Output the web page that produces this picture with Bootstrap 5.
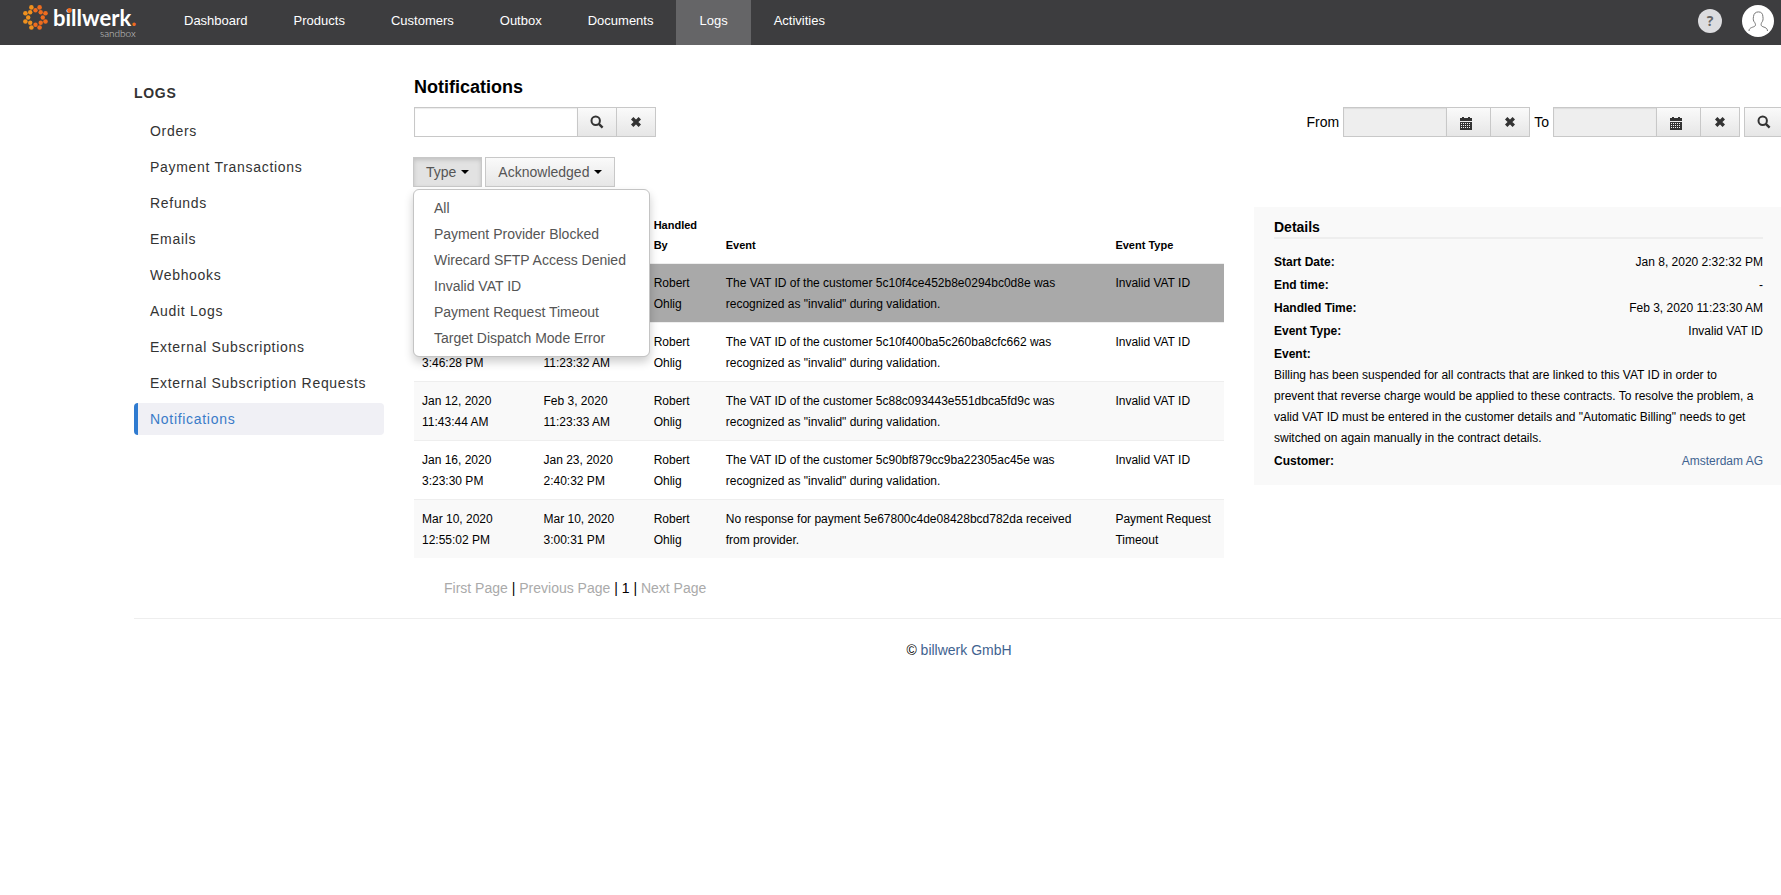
<!DOCTYPE html>
<html lang="en">
<head>
<meta charset="utf-8">
<meta name="viewport" content="width=device-width, initial-scale=1">
<title>Notifications - billwerk sandbox</title>
<link href="https://cdn.jsdelivr.net/npm/bootstrap@5.3.0/dist/css/bootstrap.min.css" rel="stylesheet">
<style>
  body { font-family: "Liberation Sans", Arial, sans-serif; font-size: 14px; line-height: 21px; color: #000; background: #fff; overflow-x: hidden; }
  a { color: #3f6390; text-decoration: none; }
  .topbar { background: #3d3d3f; height: 45px; padding: 0 7px 0 20px; }
  .brand-logo { width: 120px; height: 45px; }
  .main-menu { margin-left: 21px; }
  .main-menu .nav-link { color: #fff; font-size: 13px; line-height: 21px; padding: 10px 23px 14px; }
  .main-menu .nav-link.active { background: #656567; }
  .top-actions { gap: 20px; padding-top: 5px; }
  .round-btn { border: 0; padding: 0; border-radius: 50%; display: block; }
  .help-btn { width: 24px; height: 24px; background: #dcdcdf; color: #666; font: bold 14px/24px "Open Sans", sans-serif; }
  .avatar-btn { width: 32px; height: 32px; background: #fff; }
  .page-body { width: calc(100% + 3px); padding-left: 134px; }
  .columns { gap: 30px; }
  .side { width: 250px; flex: none; padding-top: 38px; letter-spacing: .05em; }
  .side-title { font-size: 14px; font-weight: bold; line-height: 21px; color: #333; margin: 0 0 11px; }
  .side .nav-link { color: #333; line-height: 22px; padding: 5px 12px; border-left: 4px solid transparent; border-radius: 4px; }
  .side .nav-link.active { color: #3a7bc8; background: #f0f0f5; border-left-color: #2f7bd0; }
  .page-title { font-size: 18px; font-weight: bold; line-height: 24px; margin: 0 0 8px; }
  .content-area { padding-top: 30px; }
  .tool, .tool-input { height: 30px; border: 1px solid #c8c8c8; border-radius: 0; }
  .tool { background: linear-gradient(#fafafa, #e6e6e6); padding: 0; width: 40px; display: flex; align-items: center; justify-content: center; color: #333; }
  .tool-input { padding: 0 6px; box-shadow: inset 0 1px 1px rgba(0,0,0,.08); font-size: 14px; }
  .tool-input[readonly] { background: #eee; width: 104px; }
  .tool + .tool, .tool-input + .tool { margin-left: -1px; }
  .search-input { width: 164px; }
  .tool.cal { width: 45px; padding: 2px 5px 0 0; }
  .filters { gap: 3px; margin: 20px 0 0 -1px; }
  .filter-btn { height: 30px; border: 1px solid #c8c8c8; background: linear-gradient(#fafafa, #e6e6e6); color: #555; padding: 0 12px; line-height: 28px; }
  .filter-btn.show { background: #e2e2e2; box-shadow: inset 0 2px 4px rgba(0,0,0,.15); }
  .filter-btn::after { content: ""; display: inline-block; border: 4px solid transparent; border-top-color: #000; border-bottom: 0; margin-left: 5px; vertical-align: 3px; }
  .type-menu { top: 100%; left: 0; margin-top: 2px; padding: 5px 0; width: 237px; border: 1px solid #c4c4c4; border-radius: 6px; box-shadow: 0 5px 10px rgba(0,0,0,.2); font-size: 14px; }
  .type-menu .dropdown-item { line-height: 20px; padding: 3px 20px; color: #555; }
  .split { display: grid; grid-template-columns: 81fr 53fr; gap: 30px; align-items: start; margin-top: 20px; }
  .log-table { table-layout: fixed; width: 100%; font-size: 12px; line-height: 21px; border-collapse: separate; border-spacing: 0; }
  .log-table th { font-size: 11px; line-height: 20px; vertical-align: bottom; padding: 8px; }
  .log-table td { border-top: 1px solid #eee; padding: 9px 8px 7px; vertical-align: top; }
  .log-table td:nth-child(4) { padding-right: 20px; }
  .log-table tbody tr:nth-child(odd) td { background: #f9f9f9; }
  .log-table tbody tr.picked td { background: #a9a9a9; }
  .details { background: #f9f9f9; padding: 10px 21px 12px 20px; font-size: 12px; }
  .details h2 { font-size: 14px; font-weight: bold; line-height: 20px; margin: 0 0 12px; border-bottom: 2px solid #eee; }
  .details dl > div { padding: 1px 0; }
  .details .event-text { padding-right: 5px; }
  .pager-row { padding: 20px 30px 19px; color: #000; margin: 0; }
  .pager-row a { color: #aaa; }
  .foot { border-top: 1px solid #eee; padding: 21px 0; }
</style>
</head>
<body>
<svg class="d-none">
  <symbol id="i-search" viewBox="0 0 14 14"><circle cx="5.7" cy="5.7" r="4.2" fill="none" stroke="currentColor" stroke-width="2"/><path d="M8.8 8.8 12.6 12.6" stroke="currentColor" stroke-width="2.4"/></symbol>
  <symbol id="i-remove" viewBox="0 0 12 12"><path d="M2.2 2.2 9.8 9.8M9.8 2.2 2.2 9.8" stroke="currentColor" stroke-width="3.4"/></symbol>
  <symbol id="i-calendar" viewBox="0 0 12 13"><path d="M1 1h1V0h2v1h4V0h2v1h1v2.500H1zM0 1h12v3H0zM0 5h12v8H0z" fill="currentColor"/><path d="M1 6.500h10M1 8.500h10M1 10.500h10" stroke="#f0f0f0" stroke-width="1" stroke-dasharray="1 1"/></symbol>
</svg>

<header class="topbar d-flex align-items-start">
  <a href="#" class="d-block" aria-label="billwerk sandbox">
    <svg class="brand-logo d-block" viewBox="20 0 120 45">
      <g fill="#f0911e">
        <circle cx="31.400" cy="7.400" r="2.300"/><circle cx="25.400" cy="13.300" r="2.300"/><circle cx="25.400" cy="21.500" r="2.300"/><circle cx="31.400" cy="27.500" r="2.300"/>
        <circle cx="30.200" cy="12.200" r="2.200"/><circle cx="28.200" cy="17.500" r="2.200"/><circle cx="30.200" cy="22.700" r="2.200"/>
      </g>
      <g fill="#ee6c1e">
        <circle cx="39.600" cy="7.400" r="2.300"/><circle cx="45.500" cy="13.300" r="2.300"/><circle cx="45.500" cy="21.500" r="2.300"/><circle cx="39.600" cy="27.500" r="2.300"/>
        <circle cx="35.500" cy="10.200" r="2.200"/><circle cx="40.700" cy="12.200" r="2.200"/><circle cx="42.800" cy="17.500" r="2.200"/><circle cx="40.700" cy="22.700" r="2.200"/><circle cx="35.500" cy="24.800" r="2.200"/>
      </g>
      <text x="53" y="26" font-family="Lato, sans-serif" font-size="22" font-weight="700" fill="#fff">billwerk<tspan fill="#ee6c1e">.</tspan></text>
      <circle cx="69.500" cy="10.500" r="2.400" fill="#ee6c1e"/>
      <text x="100" y="37" font-family="Lato, sans-serif" font-size="10" font-weight="300" fill="#ccc">sandbox</text>
    </svg>
  </a>
  <nav class="main-menu nav flex-nowrap">
    <a class="nav-link" href="#">Dashboard</a>
    <a class="nav-link" href="#">Products</a>
    <a class="nav-link" href="#">Customers</a>
    <a class="nav-link" href="#">Outbox</a>
    <a class="nav-link" href="#">Documents</a>
    <a class="nav-link active" href="#">Logs</a>
    <a class="nav-link" href="#">Activities</a>
  </nav>
  <div class="top-actions d-flex align-items-center ms-auto">
    <button type="button" class="round-btn help-btn">?</button>
    <button type="button" class="round-btn avatar-btn" aria-label="Account">
      <svg class="d-block" width="32" height="32" viewBox="0 0 32 32" fill="none" stroke="#777" stroke-width="1"><path d="M7 26c0-4 5-3.500 6.200-5.200 .6-.9 .2-2-.5-3.300-1.500-1.500-1.700-3.500-1.200-6 .3-3 2.200-4.600 5-4.600s4.400 1.800 4.400 4.800c.5 2.500 0 4.500-1.200 5.800-.6 1.300-.9 2.500-.2 3.300C21 22.500 25.500 22 25.500 26"/></svg>
    </button>
  </div>
</header>

<div class="page-body">
  <div class="columns d-flex">
    <aside class="side">
      <h2 class="side-title">LOGS</h2>
      <nav class="nav flex-column gap-1">
        <a class="nav-link" href="#">Orders</a>
        <a class="nav-link" href="#">Payment Transactions</a>
        <a class="nav-link" href="#">Refunds</a>
        <a class="nav-link" href="#">Emails</a>
        <a class="nav-link" href="#">Webhooks</a>
        <a class="nav-link" href="#">Audit Logs</a>
        <a class="nav-link" href="#">External Subscriptions</a>
        <a class="nav-link" href="#">External Subscription Requests</a>
        <a class="nav-link active" href="#">Notifications</a>
      </nav>
    </aside>

    <main class="content-area flex-grow-1">
      <h1 class="page-title">Notifications</h1>
      <div class="d-flex justify-content-between">
        <form class="d-flex">
          <input type="text" class="tool-input search-input" aria-label="Search">
          <button type="button" class="tool" aria-label="Search"><svg width="14" height="14"><use href="#i-search"/></svg></button>
          <button type="button" class="tool" aria-label="Clear"><svg width="12" height="12"><use href="#i-remove"/></svg></button>
        </form>
        <form class="d-flex align-items-center gap-1">
          <label for="from">From</label>
          <div class="d-flex">
            <input id="from" type="text" class="tool-input" readonly>
            <button type="button" class="tool cal" aria-label="Pick start"><svg width="12" height="13"><use href="#i-calendar"/></svg></button>
            <button type="button" class="tool" aria-label="Clear start"><svg width="12" height="12"><use href="#i-remove"/></svg></button>
          </div>
          <label for="to">To</label>
          <div class="d-flex">
            <input id="to" type="text" class="tool-input" readonly>
            <button type="button" class="tool cal" aria-label="Pick end"><svg width="12" height="13"><use href="#i-calendar"/></svg></button>
            <button type="button" class="tool" aria-label="Clear end"><svg width="12" height="12"><use href="#i-remove"/></svg></button>
          </div>
          <button type="button" class="tool" aria-label="Apply range"><svg width="14" height="14"><use href="#i-search"/></svg></button>
        </form>
      </div>

      <div class="filters d-flex">
        <div class="dropdown">
          <button type="button" class="filter-btn show" aria-expanded="true">Type</button>
          <ul class="dropdown-menu type-menu show">
            <li><a class="dropdown-item" href="#">All</a></li>
            <li><a class="dropdown-item" href="#">Payment Provider Blocked</a></li>
            <li><a class="dropdown-item" href="#">Wirecard SFTP Access Denied</a></li>
            <li><a class="dropdown-item" href="#">Invalid VAT ID</a></li>
            <li><a class="dropdown-item" href="#">Payment Request Timeout</a></li>
            <li><a class="dropdown-item" href="#">Target Dispatch Mode Error</a></li>
          </ul>
        </div>
        <button type="button" class="filter-btn">Acknowledged</button>
      </div>

      <div class="split">
        <div>
          <table class="log-table">
            <colgroup><col style="width:15%"><col style="width:13.6%"><col style="width:8.900%"><col><col style="width:14.4%"></colgroup>
            <thead>
              <tr><th></th><th></th><th>Handled By</th><th>Event</th><th>Event Type</th></tr>
            </thead>
            <tbody>
              <tr class="picked"><td></td><td></td><td>Robert Ohlig</td><td>The VAT ID of the customer 5c10f4ce452b8e0294bc0d8e was recognized as "invalid" during validation.</td><td>Invalid VAT ID</td></tr>
              <tr><td><br>3:46:28 PM</td><td><br>11:23:32 AM</td><td>Robert Ohlig</td><td>The VAT ID of the customer 5c10f400ba5c260ba8cfc662 was recognized as "invalid" during validation.</td><td>Invalid VAT ID</td></tr>
              <tr><td>Jan 12, 2020<br>11:43:44 AM</td><td>Feb 3, 2020<br>11:23:33 AM</td><td>Robert Ohlig</td><td>The VAT ID of the customer 5c88c093443e551dbca5fd9c was recognized as "invalid" during validation.</td><td>Invalid VAT ID</td></tr>
              <tr><td>Jan 16, 2020<br>3:23:30 PM</td><td>Jan 23, 2020<br>2:40:32 PM</td><td>Robert Ohlig</td><td>The VAT ID of the customer 5c90bf879cc9ba22305ac45e was recognized as "invalid" during validation.</td><td>Invalid VAT ID</td></tr>
              <tr><td>Mar 10, 2020<br>12:55:02 PM</td><td>Mar 10, 2020<br>3:00:31 PM</td><td>Robert Ohlig</td><td>No response for payment 5e67800c4de08428bcd782da received from provider.</td><td>Payment Request Timeout</td></tr>
            </tbody>
          </table>
          <p class="pager-row"><a href="#">First Page</a> | <a href="#">Previous Page</a> | 1 | <a href="#">Next Page</a></p>
        </div>

        <section class="details">
          <h2>Details</h2>
          <dl class="m-0">
            <div class="d-flex justify-content-between"><dt>Start Date:</dt><dd class="m-0">Jan 8, 2020 2:32:32 PM</dd></div>
            <div class="d-flex justify-content-between"><dt>End time:</dt><dd class="m-0">-</dd></div>
            <div class="d-flex justify-content-between"><dt>Handled Time:</dt><dd class="m-0">Feb 3, 2020 11:23:30 AM</dd></div>
            <div class="d-flex justify-content-between"><dt>Event Type:</dt><dd class="m-0">Invalid VAT ID</dd></div>
            <div><dt>Event:</dt><dd class="event-text m-0">Billing has been suspended for all contracts that are linked to this VAT ID in order to prevent that reverse charge would be applied to these contracts. To resolve the problem, a valid VAT ID must be entered in the customer details and "Automatic Billing" needs to get switched on again manually in the contract details.</dd></div>
            <div class="d-flex justify-content-between"><dt>Customer:</dt><dd class="m-0"><a href="#">Amsterdam AG</a></dd></div>
          </dl>
        </section>
      </div>
    </main>
  </div>
  <footer class="foot text-center">© <a href="#">billwerk GmbH</a></footer>
</div>
<script src="https://cdn.jsdelivr.net/npm/bootstrap@5.3.0/dist/js/bootstrap.bundle.min.js"></script>
</body>
</html>
